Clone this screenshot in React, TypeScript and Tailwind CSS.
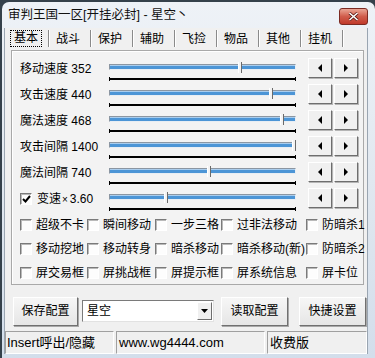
import React from "react";

const sliders = [
  { label: "移动速度", value: "352", pos: 0.706 },
  { label: "攻击速度", value: "440", pos: 0.877 },
  { label: "魔法速度", value: "468", pos: 0.936 },
  { label: "攻击间隔", value: "1400", pos: 1 },
  { label: "魔法间隔", value: "740", pos: 0.535 },
];

const tabs = ["基本", "战斗", "保护", "辅助", "飞捡", "物品", "其他", "挂机"];

const checks = [
  ["超级不卡", "瞬间移动", "一步三格", "过非法移动", "防暗杀1"],
  ["移动挖地", "移动转身", "暗杀移动", "暗杀移动(新)", "防暗杀2"],
  ["屏交易框", "屏挑战框", "屏提示框", "屏系统信息", "屏卡位"],
];

function CheckBox({ checked = false }: { checked?: boolean }) {
  return (
    <div className="w-[12px] h-[12px] shrink-0 border border-t-[#7a7a7a] border-l-[#7a7a7a] border-r-white border-b-white bg-[#fdfdfd] shadow-[inset_1px_1px_0_#b9b9b9] flex items-center justify-center">
      {checked && (
        <svg width="9" height="8" viewBox="0 0 9 8">
          <path d="M1 4 L3.5 6.5 L8 1" fill="none" stroke="#000" strokeWidth="2" />
        </svg>
      )}
    </div>
  );
}

function Slider({ pos }: { pos: number }) {
  return (
    <div className="relative w-[187px] h-[26px] shrink-0">
      <div className="mt-[8px] h-[6px] border border-t-[#8b96a2] border-l-[#8b96a2] border-r-[#e8eef4] border-b-[#e8eef4] bg-[#4c95d6] shadow-[inset_0_1px_0_#a9cdee]" />
      <div className="mt-[7px] flex items-center">
        <div className="w-[1px] h-[4px] bg-black" />
        <div className="flex-1 h-[2px] bg-black" />
        <div className="w-[1px] h-[4px] bg-black" />
      </div>
      <div
        className="absolute top-[6px] w-[4px] h-[11px] bg-[#f3f3f3] border-l border-white border-r border-r-[#6a6a6a]"
        style={{ left: `${pos * 183}px` }}
      />
    </div>
  );
}

function ArrowButtons() {
  const btn =
    "w-[24px] h-[20px] bg-[#f0f0f0] border border-t-white border-l-white border-r-[#6e6e6e] border-b-[#6e6e6e] shadow-[1px_1px_0_#b5b5b5] flex items-center justify-center";
  return (
    <div className="flex gap-[2px] mt-[2px] ml-[12px]">
      <div className={btn}>
        <svg width="4" height="8" viewBox="0 0 4 8">
          <polygon points="4,0 0,4 4,8" fill="#000" />
        </svg>
      </div>
      <div className={btn}>
        <svg width="4" height="8" viewBox="0 0 4 8">
          <polygon points="0,0 4,4 0,8" fill="#000" />
        </svg>
      </div>
    </div>
  );
}

function Button({ label, w }: { label: string; w: string }) {
  return (
    <div
      className={`${w} h-[29px] flex items-center justify-center bg-gradient-to-b from-[#f6f6f6] to-[#e6e6e6] border border-t-white border-l-white border-r-[#707070] border-b-[#707070] shadow-[1px_1px_0_#a8a8a8] text-[12px]`}
    >
      {label}
    </div>
  );
}

export default function App() {
  return (
    <div className="w-[375px] h-[358px] bg-[#35414b] overflow-hidden font-['Liberation_Sans','Noto_Sans_CJK_SC',sans-serif] text-black">
      <div className="ml-[2px] mt-[2px] w-[373px] h-[356px] rounded-t-[7px] bg-gradient-to-b from-[#eef2f7] via-[#e1e8f0] to-[#d3deeb] flex flex-col">
        {/* title bar */}
        <div className="h-[26px] flex items-center justify-between pl-[6px] pr-[7px]">
          <span className="text-[12.5px] text-[#111]">审判王国一区[开挂必封] - 星空丶</span>
          <div className="w-[29px] h-[17px] mt-[3px] rounded-[3px] border border-[#7b2a22] bg-gradient-to-b from-[#e9a595] via-[#d05c4b] to-[#c0392b] flex items-center justify-center">
            <svg width="11" height="9" viewBox="0 0 11 9">
              <path d="M1.5 1 L9.5 8 M9.5 1 L1.5 8" stroke="#5a1a14" strokeWidth="3" />
              <path d="M1.5 1 L9.5 8 M9.5 1 L1.5 8" stroke="#fff" strokeWidth="1.6" />
            </svg>
          </div>
        </div>

        {/* client */}
        <div className="ml-[2px] w-[364px] h-[326px] bg-[#f0f0f0] border-l border-r border-[#9aa5b1] flex flex-col">
          {/* tabs */}
          <div className="h-[21px] flex items-center pl-[3px] text-[12px]">
            {tabs.map((t, i) => (
              <div key={t} className="flex items-center">
                <div className="w-[40px] h-[20px] flex items-center pl-[2px]">
                  {i === 0 ? (
                    <span className="px-[3px] leading-[15px] border border-dotted border-black">{t}</span>
                  ) : (
                    <span className="pl-[4px]">{t}</span>
                  )}
                </div>
                <div className="w-[2px] h-[17px] border-l border-[#8a8a8a] border-r border-r-white" />
              </div>
            ))}
          </div>

          {/* panel */}
          <div className="ml-[6px] mt-[1px] w-[353px] h-[235px] border border-[#a9a9a9] shadow-[inset_1px_1px_0_#fff] bg-[#f3f3f3] pt-[5px] pl-[8px] text-[12px]">
            {sliders.map((s) => (
              <div key={s.label} className="h-[26px] flex items-start">
                <div className="w-[89px] h-[26px] leading-[26px] whitespace-nowrap">
                  {s.label} {s.value}
                </div>
                <Slider pos={s.pos} />
                <ArrowButtons />
              </div>
            ))}
            <div className="h-[26px] flex items-start">
              <div className="w-[89px] h-[26px] flex items-center whitespace-nowrap">
                <CheckBox checked />
                <span className="ml-[5px]">变速</span>
                <span className="text-[10px] ml-[1px]">×</span>
                <span className="ml-[2px]">3.60</span>
              </div>
              <Slider pos={0.3} />
              <ArrowButtons />
            </div>

            <div className="mt-[1px]">
              {checks.map((row, r) => (
                <div key={r} className="h-[24px] grid grid-cols-[67px_68px_66px_85px_1fr] items-center">
                  {row.map((c) => (
                    <div key={c} className="flex items-center whitespace-nowrap">
                      <CheckBox />
                      <span className="ml-[4px]">{c}</span>
                    </div>
                  ))}
                </div>
              ))}
            </div>
          </div>

          {/* bottom buttons */}
          <div className="mt-[11px] h-[30px] flex items-center pl-[8px]">
            <Button label="保存配置" w="w-[65px]" />
            <div className="ml-[4px] w-[132px] h-[22px] bg-white border border-t-[#7a7a7a] border-l-[#7a7a7a] border-r-[#e2e2e2] border-b-[#e2e2e2] flex items-center">
              <span className="flex-1 pl-[4px] text-[12px]">星空</span>
              <div className="w-[15px] h-[18px] mr-[1px] bg-[#f0f0f0] border border-t-white border-l-white border-r-[#6e6e6e] border-b-[#6e6e6e] flex items-center justify-center">
                <svg width="7" height="4" viewBox="0 0 7 4">
                  <polygon points="0,0 7,0 3.5,4" fill="#000" />
                </svg>
              </div>
            </div>
            <div className="ml-[7px]">
              <Button label="读取配置" w="w-[67px]" />
            </div>
            <div className="ml-[11px]">
              <Button label="快捷设置" w="w-[67px]" />
            </div>
          </div>

          {/* status bar */}
          <div className="mt-[5px] h-[23px] flex gap-[2px] text-[13px]">
            <div className="w-[109px] flex items-center pl-[1px] border border-t-[#a0a0a0] border-l-[#a0a0a0] border-r-white border-b-white whitespace-nowrap">
              Insert呼出/隐藏
            </div>
            <div className="w-[149px] flex items-center pl-[2px] border border-t-[#a0a0a0] border-l-[#a0a0a0] border-r-white border-b-white">
              www.wg4444.com
            </div>
            <div className="flex-1 flex items-center pl-[2px] border border-t-[#a0a0a0] border-l-[#a0a0a0] border-r-white border-b-white">
              收费版
            </div>
          </div>
        </div>
      </div>
    </div>
  );
}
